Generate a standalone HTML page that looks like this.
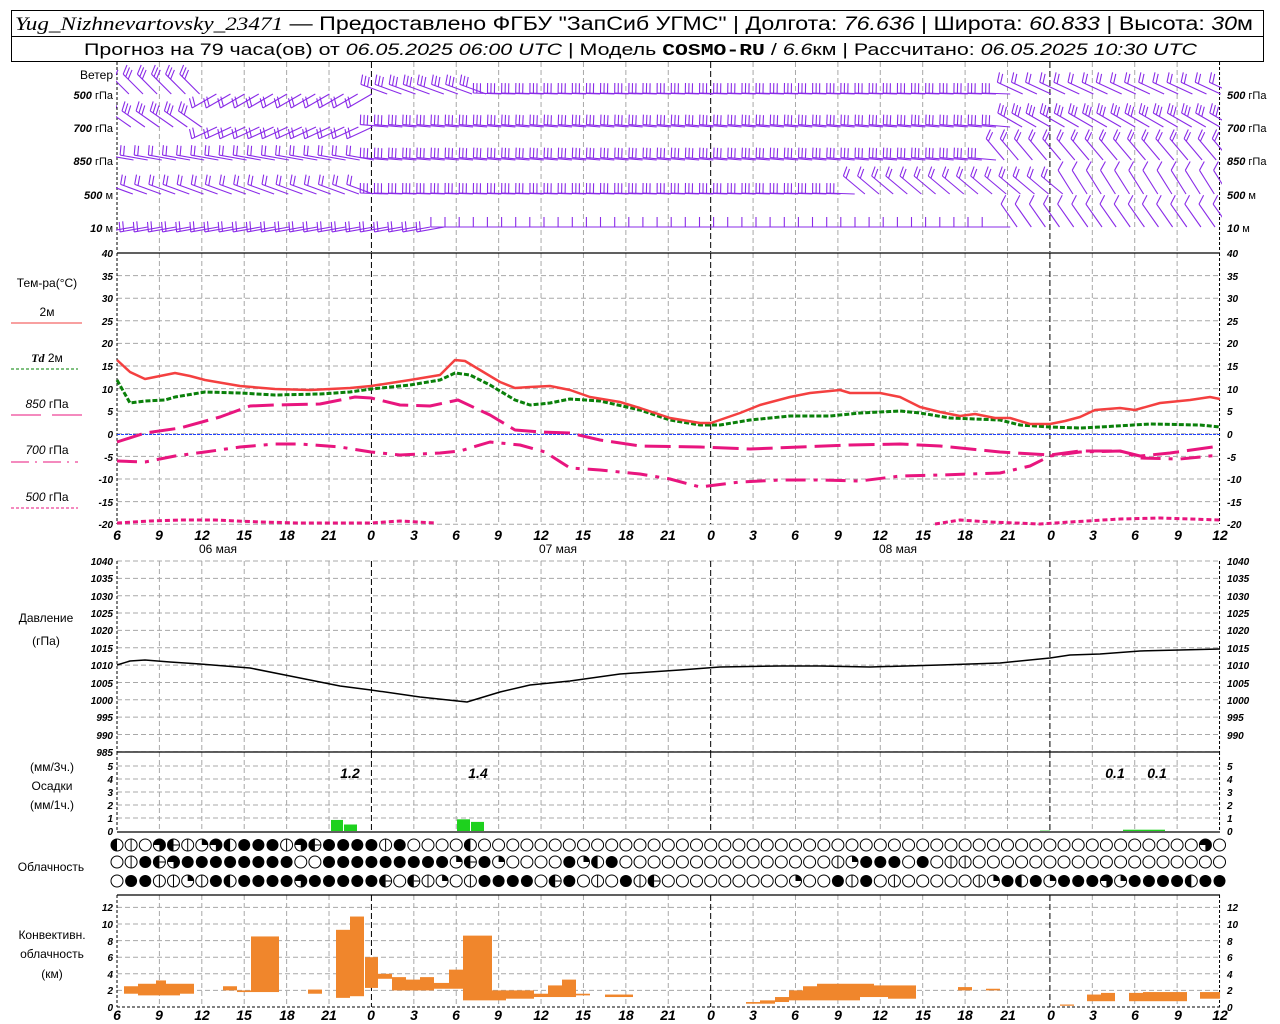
<!DOCTYPE html>
<html><head><meta charset="utf-8"><style>
html,body{margin:0;padding:0;background:#fff;}
svg{display:block;}
text{font-family:"Liberation Sans",sans-serif;}
.ax{font-size:10px;font-style:italic;font-weight:bold;}
.wl{font-size:11px;font-style:italic;font-weight:bold;}
.lbl{font-size:12px;}
.xl{font-size:14px;font-style:italic;font-weight:bold;}
</style></head><body>
<svg id="s" width="1280" height="1024" xmlns="http://www.w3.org/2000/svg">
<defs><clipPath id="wc"><rect x="116" y="62" width="1106" height="190"/></clipPath></defs>
<rect x="0" y="0" width="1280" height="1024" fill="#fff"/>
<g id="g"></g>
<g id="w" clip-path="url(#wc)"></g>
<rect x="11.5" y="10.5" width="1252" height="51" fill="none" stroke="#000"/>
<line x1="11" y1="36.5" x2="1264" y2="36.5" stroke="#000"/>
<text x="15" y="30" font-size="19" textLength="1238" lengthAdjust="spacingAndGlyphs"><tspan font-family="Liberation Serif" font-style="italic">Yug_Nizhnevartovsky_23471</tspan> — Предоставлено ФГБУ "ЗапСиб УГМС" | Долгота: <tspan font-style="italic">76.636</tspan> | Широта: <tspan font-style="italic">60.833</tspan> | Высота: <tspan font-style="italic">30</tspan>м</text>
<text x="84" y="55" font-size="17" textLength="1113" lengthAdjust="spacingAndGlyphs">Прогноз на 79 часа(ов) от <tspan font-style="italic">06.05.2025 06:00 UTC</tspan>  | Модель <tspan font-family="Liberation Mono" font-weight="bold">COSMO-RU</tspan> / <tspan font-style="italic">6.6</tspan>км | Рассчитано: <tspan font-style="italic">06.05.2025 10:30 UTC</tspan></text>

<text class="lbl" x="113" y="79" text-anchor="end">Ветер</text>
<text class="wl" x="113" y="99" text-anchor="end">500 <tspan font-style="normal" font-weight="normal">гПа</tspan></text>
<text class="wl" x="113" y="132" text-anchor="end">700 <tspan font-style="normal" font-weight="normal">гПа</tspan></text>
<text class="wl" x="113" y="165" text-anchor="end">850 <tspan font-style="normal" font-weight="normal">гПа</tspan></text>
<text class="wl" x="113" y="199" text-anchor="end">500 <tspan font-style="normal" font-weight="normal">м</tspan></text>
<text class="wl" x="113" y="232" text-anchor="end">10 <tspan font-style="normal" font-weight="normal"> м</tspan></text>
<text class="wl" x="1227" y="99">500 <tspan font-style="normal" font-weight="normal">гПа</tspan></text>
<text class="wl" x="1227" y="132">700 <tspan font-style="normal" font-weight="normal">гПа</tspan></text>
<text class="wl" x="1227" y="165">850 <tspan font-style="normal" font-weight="normal">гПа</tspan></text>
<text class="wl" x="1227" y="199">500 <tspan font-style="normal" font-weight="normal">м</tspan></text>
<text class="wl" x="1227" y="232">10 <tspan font-style="normal" font-weight="normal"> м</tspan></text>

<text class="lbl" x="47" y="287" text-anchor="middle">Тем-ра(°C)</text>
<text class="lbl" x="47" y="316" text-anchor="middle">2м</text>
<line x1="11" y1="323" x2="82" y2="323" stroke="#f04040"/>
<text class="lbl" x="47" y="362" text-anchor="middle"><tspan font-style="italic" font-weight="bold" font-family="Liberation Serif">Td</tspan>  2м</text>
<line x1="11" y1="369" x2="78" y2="369" stroke="#008000" stroke-dasharray="3,2"/>
<text class="lbl" x="47" y="408" text-anchor="middle"><tspan font-style="italic">850</tspan> гПа</text>
<line x1="11" y1="415" x2="41" y2="415" stroke="#e8157e"/><line x1="52" y1="415" x2="82" y2="415" stroke="#e8157e"/>
<text class="lbl" x="47" y="454" text-anchor="middle"><tspan font-style="italic">700</tspan> гПа</text>
<line x1="11" y1="462" x2="78" y2="462" stroke="#e8157e" stroke-dasharray="18,6,2,6"/>
<text class="lbl" x="47" y="501" text-anchor="middle"><tspan font-style="italic">500</tspan> гПа</text>
<line x1="11" y1="508" x2="78" y2="508" stroke="#e8157e" stroke-dasharray="3,2"/>

<text class="ax" text-anchor="end"><tspan x="113" y="257">40</tspan><tspan x="113" y="280">35</tspan><tspan x="113" y="302">30</tspan><tspan x="113" y="325">25</tspan><tspan x="113" y="347">20</tspan><tspan x="113" y="370">15</tspan><tspan x="113" y="393">10</tspan><tspan x="113" y="415">5</tspan><tspan x="113" y="438">0</tspan><tspan x="113" y="461">-5</tspan><tspan x="113" y="483">-10</tspan><tspan x="113" y="506">-15</tspan><tspan x="113" y="528">-20</tspan></text>
<text class="ax"><tspan x="1227" y="257">40</tspan><tspan x="1227" y="280">35</tspan><tspan x="1227" y="302">30</tspan><tspan x="1227" y="325">25</tspan><tspan x="1227" y="347">20</tspan><tspan x="1227" y="370">15</tspan><tspan x="1227" y="393">10</tspan><tspan x="1227" y="415">5</tspan><tspan x="1227" y="438">0</tspan><tspan x="1227" y="461">-5</tspan><tspan x="1227" y="483">-10</tspan><tspan x="1227" y="506">-15</tspan><tspan x="1227" y="528">-20</tspan></text>

<text class="xl" text-anchor="middle"><tspan x="117" y="540">6</tspan><tspan x="159" y="540">9</tspan><tspan x="202" y="540">12</tspan><tspan x="244" y="540">15</tspan><tspan x="287" y="540">18</tspan><tspan x="329" y="540">21</tspan><tspan x="371" y="540">0</tspan><tspan x="414" y="540">3</tspan><tspan x="456" y="540">6</tspan><tspan x="498" y="540">9</tspan><tspan x="541" y="540">12</tspan><tspan x="583" y="540">15</tspan><tspan x="626" y="540">18</tspan><tspan x="668" y="540">21</tspan><tspan x="711" y="540">0</tspan><tspan x="753" y="540">3</tspan><tspan x="795" y="540">6</tspan><tspan x="838" y="540">9</tspan><tspan x="880" y="540">12</tspan><tspan x="923" y="540">15</tspan><tspan x="965" y="540">18</tspan><tspan x="1008" y="540">21</tspan><tspan x="1051" y="540">0</tspan><tspan x="1093" y="540">3</tspan><tspan x="1135" y="540">6</tspan><tspan x="1178" y="540">9</tspan><tspan x="1220" y="540">12</tspan></text>
<text class="lbl" text-anchor="middle"><tspan x="218" y="553">06 мая</tspan><tspan x="558" y="553">07 мая</tspan><tspan x="898" y="553">08 мая</tspan></text>

<text class="lbl" x="46" y="622" text-anchor="middle">Давление</text>
<text class="lbl" x="46" y="645" text-anchor="middle">(гПа)</text>
<text class="ax" text-anchor="end" font-size="9"><tspan x="113" y="565">1040</tspan><tspan x="113" y="582">1035</tspan><tspan x="113" y="600">1030</tspan><tspan x="113" y="617">1025</tspan><tspan x="113" y="634">1020</tspan><tspan x="113" y="652">1015</tspan><tspan x="113" y="669">1010</tspan><tspan x="113" y="687">1005</tspan><tspan x="113" y="704">1000</tspan><tspan x="113" y="721">995</tspan><tspan x="113" y="739">990</tspan><tspan x="113" y="756">985</tspan></text>
<text class="ax" font-size="9"><tspan x="1227" y="565">1040</tspan><tspan x="1227" y="582">1035</tspan><tspan x="1227" y="600">1030</tspan><tspan x="1227" y="617">1025</tspan><tspan x="1227" y="634">1020</tspan><tspan x="1227" y="652">1015</tspan><tspan x="1227" y="669">1010</tspan><tspan x="1227" y="687">1005</tspan><tspan x="1227" y="704">1000</tspan><tspan x="1227" y="721">995</tspan><tspan x="1227" y="739">990</tspan></text>

<text class="lbl" x="52" y="771" text-anchor="middle">(мм/3ч.)</text>
<text class="lbl" x="52" y="790" text-anchor="middle">Осадки</text>
<text class="lbl" x="52" y="809" text-anchor="middle">(мм/1ч.)</text>
<text class="ax" text-anchor="end"><tspan x="113" y="835">0</tspan><tspan x="113" y="822">1</tspan><tspan x="113" y="809">2</tspan><tspan x="113" y="796">3</tspan><tspan x="113" y="783">4</tspan><tspan x="113" y="770">5</tspan></text>
<text class="ax"><tspan x="1227" y="835">0</tspan><tspan x="1227" y="822">1</tspan><tspan x="1227" y="809">2</tspan><tspan x="1227" y="796">3</tspan><tspan x="1227" y="783">4</tspan><tspan x="1227" y="770">5</tspan></text>
<text class="xl" font-size="13" text-anchor="middle" font-weight="normal"><tspan x="350" y="778">1.2</tspan><tspan x="478" y="778">1.4</tspan><tspan x="1115" y="778">0.1</tspan><tspan x="1157" y="778">0.1</tspan></text>

<text class="lbl" x="51" y="871" text-anchor="middle">Облачность</text>

<text class="lbl" x="52" y="939" text-anchor="middle">Конвективн.</text>
<text class="lbl" x="52" y="958" text-anchor="middle">облачность</text>
<text class="lbl" x="52" y="978" text-anchor="middle">(км)</text>
<text class="ax" text-anchor="end"><tspan x="113" y="1011">0</tspan><tspan x="113" y="994">2</tspan><tspan x="113" y="978">4</tspan><tspan x="113" y="961">6</tspan><tspan x="113" y="945">8</tspan><tspan x="113" y="928">10</tspan><tspan x="113" y="911">12</tspan></text>
<text class="ax"><tspan x="1227" y="1011">0</tspan><tspan x="1227" y="994">2</tspan><tspan x="1227" y="978">4</tspan><tspan x="1227" y="961">6</tspan><tspan x="1227" y="945">8</tspan><tspan x="1227" y="928">10</tspan><tspan x="1227" y="911">12</tspan></text>
<text class="xl" text-anchor="middle"><tspan x="117" y="1020">6</tspan><tspan x="159" y="1020">9</tspan><tspan x="202" y="1020">12</tspan><tspan x="244" y="1020">15</tspan><tspan x="287" y="1020">18</tspan><tspan x="329" y="1020">21</tspan><tspan x="371" y="1020">0</tspan><tspan x="414" y="1020">3</tspan><tspan x="456" y="1020">6</tspan><tspan x="498" y="1020">9</tspan><tspan x="541" y="1020">12</tspan><tspan x="583" y="1020">15</tspan><tspan x="626" y="1020">18</tspan><tspan x="668" y="1020">21</tspan><tspan x="711" y="1020">0</tspan><tspan x="753" y="1020">3</tspan><tspan x="795" y="1020">6</tspan><tspan x="838" y="1020">9</tspan><tspan x="880" y="1020">12</tspan><tspan x="923" y="1020">15</tspan><tspan x="965" y="1020">18</tspan><tspan x="1008" y="1020">21</tspan><tspan x="1051" y="1020">0</tspan><tspan x="1093" y="1020">3</tspan><tspan x="1135" y="1020">6</tspan><tspan x="1178" y="1020">9</tspan><tspan x="1220" y="1020">12</tspan></text>
</svg>
<script>
(function(){
var h='';
function X(hr){return 117+hr*14.135;}
function L(x1,y1,x2,y2,c,w,d){h+='<line x1="'+x1+'" y1="'+y1+'" x2="'+x2+'" y2="'+y2+'" stroke="'+c+'" stroke-width="'+(w||1)+'"'+(d?' stroke-dasharray="'+d+'"':'')+'/>';}
function P(pts,c,w,d){h+='<polyline fill="none" points="'+pts.map(function(p){return p.join(',')}).join(' ')+'" stroke="'+c+'" stroke-width="'+w+'"'+(d?' stroke-dasharray="'+d+'"':'')+' stroke-linejoin="round"/>';}
var gray='#a8a8a8',gd='5,3';
var panels=[[62,252],[253,524],[561,752],[752,832],[895,1007]];
for(var v=-20;v<=40;v+=5){var y=253+(40-v)*4.52;L(117,y,1220,y,gray,1,gd);}
for(var p=985;p<=1040;p+=5){var y=561+(1040-p)*3.47;L(117,y,1220,y,gray,1,gd);}
for(var m=1;m<=5;m++){var y=831-m*13;L(117,y,1220,y,gray,1,gd);}
for(var k=2;k<=12;k+=2){var y=1007-k*8.3;L(117,y,1220,y,gray,1,gd);}
panels.forEach(function(pn){
 for(var i=0;i<=26;i++){var x=X(i*3);var mid=(i%8==6);
  if(i==0||i==26){L(x,pn[0],x,pn[1],'#000',1,'3,2');}
  else if(mid)L(x,pn[0],x,pn[1],'#000',1,'6,3');
  else L(x,pn[0],x,pn[1],gray,1,gd);}
});
L(117,253,1220,253,'#000',1.2);L(117,752,1220,752,'#000',1.2);L(117,832,1220,832,'#000',1.2);L(117,895,1220,895,'#000',1.2);
L(117,1007,1220,1007,'#000',1,'3,2');
L(117,434.5,1220,434.5,'#2040ff',1,'3,1');
var pink='#e8157e';
P([[117,523],[150,521],[180,520],[215,520],[260,522],[300,523],[371,523],[400,521],[435,523]],pink,3,'5,3');
P([[935,524],[960,520],[990,522],[1040,524],[1070,522],[1120,519],[1160,518],[1220,520]],pink,3,'5,3');
P([[117,461],[145,462],[175,456],[205,452],[240,447],[275,444],[300,444],[340,447],[371,452],[400,455],[440,453],[460,451],[490,442],[520,445],[545,452],[570,468],[600,470],[640,474],[670,479],[700,487],[740,482],[780,480],[820,480],[860,481],[900,476],[940,475],[1000,473],[1030,466],[1050,456],[1080,452],[1120,451],[1140,458],[1180,459],[1220,455]],pink,3,'20,8,4,8');
P([[117,442],[145,433],[180,428],[220,417],[250,406],[275,405],[320,404],[355,397],[371,398],[400,405],[430,406],[458,400],[490,415],[515,430],[540,432],[570,433],[600,440],[640,446],[700,447],[750,449],[800,447],[850,445],[900,444],[940,446],[1000,452],[1050,455],[1080,451],[1120,451],[1140,456],[1170,453],[1220,446]],pink,3,'26,8');
P([[117,380],[130,403],[145,401],[165,400],[175,397],[205,392],[240,393],[275,395],[320,394],[350,392],[371,389],[410,385],[440,380],[455,373],[470,375],[490,385],[515,400],[530,405],[550,403],[570,399],[600,401],[640,410],[670,420],[700,425],[720,425],[750,420],[790,416],[830,416],[860,413],[900,411],[920,413],[950,418],[1000,420],[1020,425],[1050,427],[1080,428],[1100,427],[1150,424],[1200,425],[1220,427]],'#0a800a',3,'5,2');
P([[117,360],[130,372],[145,379],[160,376],[175,373],[190,376],[205,380],[240,386],[275,389],[310,390],[350,388],[371,386],[410,380],[440,375],[455,360],[465,361],[480,370],[500,382],[515,388],[530,387],[550,386],[570,390],[590,397],[620,402],[640,408],[670,418],[700,423],[711,423],[740,413],[760,405],[790,397],[810,393],[840,390],[850,393],[880,393],[900,397],[920,407],[940,412],[960,416],[975,414],[995,418],[1010,418],[1030,424],[1050,424],[1065,421],[1080,417],[1095,410],[1120,408],[1135,410],[1160,403],[1190,400],[1210,397],[1220,399]],'#f44040',2.5);
P([[117,665],[130,661],[145,660],[170,662],[200,664],[250,668],[300,678],[340,686],[371,690],[420,697],[467,702],[500,692],[530,685],[570,681],[620,674],[680,670],[720,667],[780,666],[820,666],[870,667],[940,665],[1000,663],[1050,658],[1070,655],[1100,654],[1140,651],[1180,650],[1220,649]],'#000',1.5);
[[331,343,0.85],[344,357,0.5],[457,470,0.9],[471,484,0.7],[1123,1165,0.1],[1040,1050,0.03]].forEach(function(b){var t=831-b[2]*13;h+='<rect x="'+b[0]+'" y="'+t+'" width="'+(b[1]-b[0])+'" height="'+(831-t)+'" fill="#1ed11e"/>';});
var cb=[[124,138,2.5,1.6],[138,156,2.8,1.4],[156,166,3.2,1.4],[166,180,2.8,1.4],[180,194,2.8,1.6],[223,237,2.5,2.0],[237,251,2.0,1.8],[251,279,8.5,1.8],[308,322,2.1,1.6],[336,350,9.3,1.1],[350,364,10.9,1.3],[365,378,6,2.3],[378,392,4,3.4],[392,406,3.6,2.0],[406,420,3.3,2.0],[420,434,3.6,2.0],[434,449,2.9,2.2],[449,463,4.5,2.2],[463,492,8.6,0.8],[492,506,2,0.8],[506,534,2,1],[534,548,1.6,1.2],[548,562,2.6,1.2],[562,576,3.3,1.2],[576,590,1.6,1.4],[605,633,1.5,1.2],[746,760,0.6,0.4],[760,775,0.8,0.4],[775,789,1.2,0.6],[789,803,2.0,0.8],[803,817,2.5,0.8],[817,860,2.8,0.8],[860,874,2.8,1.2],[874,888,2.6,1.2],[888,916,2.6,1.0],[958,972,2.4,2.0],[986,1000,2.2,2.0],[1060,1074,0.3,0.15],[1087,1101,1.5,0.7],[1101,1115,1.7,0.7],[1129,1143,1.7,0.7],[1143,1187,1.8,0.7],[1200,1220,1.8,1.0]];
cb.forEach(function(b){var t=1007-b[2]*8.3,bt=1007-b[3]*8.3;h+='<rect x="'+b[0]+'" y="'+t+'" width="'+(b[1]-b[0])+'" height="'+(bt-t)+'" fill="#f0862c"/>';});
var r1=[2,5,0,3,6,5,1,3,2,4,4,4,5,3,6,4,4,4,4,5,4,0,0,0,0,2,0,0,0,0,0,0,0,0,0,0,0,0,0];
var r2=[0,5,4,6,3,4,4,4,4,4,4,4,4,0,0,4,4,4,4,4,4,4,4,4,1,6,4,1,0,0,0,0,4,1,2,4,0,0,0];
var r3=[0,4,4,5,5,1,5,4,2,4,4,4,4,3,4,4,4,4,4,6,0,6,5,1,0,5,4,4,4,4,0,6,4,0,5,0,4,5,6];
while(r1.length<79)r1.push(0);r1[77]=3;
var s2={51:5,52:1,53:4,54:4,55:4,57:4,59:5,60:5};while(r2.length<79){r2.push(s2[r2.length]||0);}
var s3={48:1,51:4,52:5,53:4,55:5,61:5,62:1,63:4,64:2,65:4,66:1,67:4,68:4,69:4,70:3,71:1,72:4,73:4,74:4,75:4,76:2,77:4,78:4};while(r3.length<79){r3.push(s3[r3.length]||0);}
function cloud(x,y,t){var r=6;x=+x.toFixed(1);
 if(t==4){h+='<circle cx="'+x+'" cy="'+y+'" r="'+r+'" fill="#000"/>';return;}
 h+='<circle cx="'+x+'" cy="'+y+'" r="'+r+'" fill="#fff" stroke="#000" stroke-width="1"/>';
 if(t==2)h+='<path d="M'+x+','+(y-r)+' A'+r+','+r+' 0 0 0 '+x+','+(y+r)+'Z" fill="#000"/>';
 if(t==1)h+='<path d="M'+x+','+y+' L'+x+','+(y-r)+' A'+r+','+r+' 0 0 1 '+(x+r)+','+y+'Z" fill="#000"/>';
 if(t==3)h+='<path d="M'+x+','+y+' L'+x+','+(y+r)+' A'+r+','+r+' 0 1 0 '+(x-r)+','+y+'Z" fill="#000"/>';
 if(t==5)h+='<line x1="'+x+'" y1="'+(y-r)+'" x2="'+x+'" y2="'+(y+r)+'" stroke="#000"/>';
 if(t==6){h+='<path d="M'+x+','+(y-r)+' A'+r+','+r+' 0 0 0 '+x+','+(y+r)+'Z" fill="#000"/>';h+='<line x1="'+x+'" y1="'+y+'" x2="'+(x+r)+'" y2="'+y+'" stroke="#000"/>';}
}
for(var i=0;i<79;i++){var x=X(i);cloud(x,845,r1[i]);cloud(x,862,r2[i]);cloud(x,881,r3[i]);}
document.getElementById('g').innerHTML=h;
h='';
var wc='#8a2be8';
var rows=[
 [94,[[190,225,3],[370,150,2],[480,200,3],[1000,182,3],[1221,205,2]]],
 [127,[[190,215,3],[370,155,2],[1000,185,3],[1221,210,3]]],
 [160,[[370,190,2],[980,185,3],[1221,230,2]]],
 [194,[[370,200,2],[850,182,3],[1050,220,2],[1221,238,1]]],
 [227,[[440,170,2],[1000,180,1],[1221,235,1]]]];
rows.forEach(function(rw){
 var y0=rw[0];
 for(var i=0;i<79;i++){var x0=X(i);
  var seg=rw[1].filter(function(s){return x0<=s[0];})[0];if(!seg)break;
  var ph=seg[1]*Math.PI/180,n=seg[2],Ln=28;
  var ux=Math.cos(ph),uy=Math.sin(ph);
  var x=x0-ux*Ln*0.6;
  var tx=x+ux*Ln,ty=y0+uy*Ln;
  L(x.toFixed(1),y0,tx.toFixed(1),ty.toFixed(1),wc,1.1);
  var fx=-uy,fy=ux; if(fy>0){fx=-fx;fy=-fy;}
  fx=fx*0.5;fy=fy*0.5-0.5;var nn=Math.sqrt(fx*fx+fy*fy);fx/=nn;fy/=nn;
  for(var k=0;k<n;k++){var bx=tx-ux*k*3.5,by=ty-uy*k*3.5;
   L(bx.toFixed(1),by.toFixed(1),(bx+fx*10).toFixed(1),(by+fy*10).toFixed(1),wc,1.1);}
 }
});
document.getElementById('w').innerHTML=h;
})();
</script>
</body></html>
